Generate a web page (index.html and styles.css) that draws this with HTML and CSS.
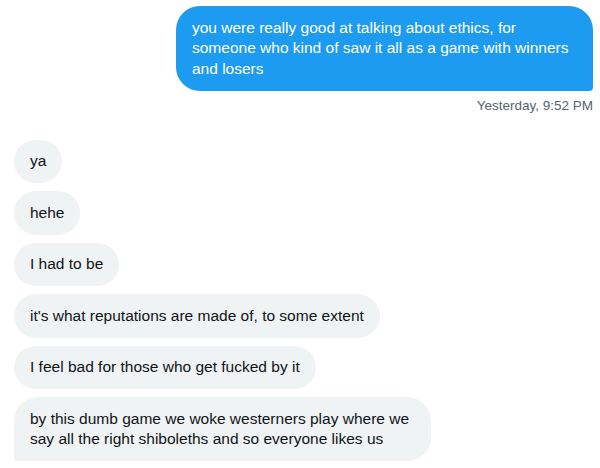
FILE: index.html
```html
<!DOCTYPE html>
<html>
<head>
<meta charset="utf-8">
<link rel="stylesheet" href="styles.css">
</head>
<body>
<div class="thread">
  <div class="group sent">
    <div class="bubble out">you were really good at talking about ethics, for someone who kind of saw it all as a game with winners and losers</div>
    <div class="time">Yesterday, 9:52 PM</div>
  </div>
  <div class="group received">
    <div class="bubble in">ya</div>
    <div class="bubble in">hehe</div>
    <div class="bubble in">I had to be</div>
    <div class="bubble in">it's what reputations are made of, to some extent</div>
    <div class="bubble in">I feel bad for those who get fucked by it</div>
    <div class="bubble in last">by this dumb game we woke westerners play where we say all the right shiboleths and so everyone likes us</div>
  </div>
</div>
</body>
</html>
```
FILE: styles.css
```css
html, body {
  margin: 0;
  padding: 0;
  background: #ffffff;
}
body {
  font-family: "Liberation Sans", Arial, sans-serif;
  font-size: 15.5px;
  line-height: 20.5px;
  color: #0f1419;
}
.thread {
  width: 600px;
  height: 468px;
  overflow: hidden;
  box-sizing: border-box;
  padding: 6px 7px 0 14px;
  display: flex;
  flex-direction: column;
}
.group {
  display: flex;
  flex-direction: column;
  gap: 8px;
}
.sent {
  align-items: flex-end;
}
.received {
  align-items: flex-start;
  margin-top: 26px;
}
.bubble {
  padding: 11.5px 16px;
  max-width: 385px;
  border-radius: 24px;
}
.out {
  background: #1d9bf0;
  color: #ffffff;
  border-bottom-right-radius: 4px;
}
.in {
  background: #eff3f4;
  color: #0f1419;
}
.in.last {
  border-bottom-left-radius: 4px;
}
.time {
  margin-top: -1px;
  font-size: 13.5px;
  line-height: 16px;
  color: #536471;
}
```
